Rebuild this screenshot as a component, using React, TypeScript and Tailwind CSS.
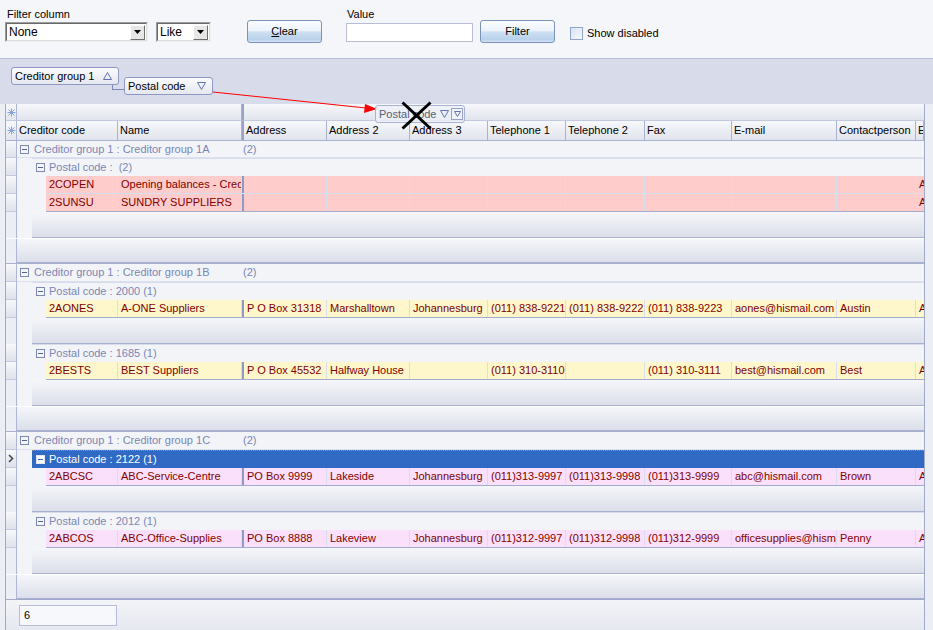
import React from "react";

type Row = string[];
type Sub = { label: string; rows: Row[]; selected?: boolean };
type Group = { label: string; count: string; tint: string; first?: boolean; subs: Sub[] };

const groups: Group[] = [
  {
    label: "Creditor group 1 : Creditor group 1A",
    count: "(2)",
    tint: "bg-[#ffcccc]",
    first: true,
    subs: [
      {
        label: "Postal code :  (2)",
        rows: [
          ["2COPEN", "Opening balances - Creditors", "", "", "", "", "", "", "", "", "A"],
          ["2SUNSU", "SUNDRY SUPPLIERS", "", "", "", "", "", "", "", "", "A"],
        ],
      },
    ],
  },
  {
    label: "Creditor group 1 : Creditor group 1B",
    count: "(2)",
    tint: "bg-[#fff7cc]",
    subs: [
      {
        label: "Postal code : 2000 (1)",
        rows: [["2AONES", "A-ONE Suppliers", "P O Box 31318", "Marshalltown", "Johannesburg", "(011) 838-9221", "(011) 838-9222", "(011) 838-9223", "aones@hismail.com", "Austin", "A"]],
      },
      {
        label: "Postal code : 1685 (1)",
        rows: [["2BESTS", "BEST Suppliers", "P O Box 45532", "Halfway House", "", "(011) 310-3110", "", "(011) 310-3111", "best@hismail.com", "Best", "A"]],
      },
    ],
  },
  {
    label: "Creditor group 1 : Creditor group 1C",
    count: "(2)",
    tint: "bg-[#fae0fa]",
    subs: [
      {
        label: "Postal code : 2122 (1)",
        selected: true,
        rows: [["2ABCSC", "ABC-Service-Centre", "PO Box 9999", "Lakeside", "Johannesburg", "(011)313-9997", "(011)313-9998", "(011)313-9999", "abc@hismail.com", "Brown", "A"]],
      },
      {
        label: "Postal code : 2012 (1)",
        rows: [["2ABCOS", "ABC-Office-Supplies", "PO Box 8888", "Lakeview", "Johannesburg", "(011)312-9997", "(011)312-9998", "(011)312-9999", "officesupplies@hismail.com", "Penny", "A"]],
      },
    ],
  },
];

// widths of the data cells, starting at the first column after the indents
const dataCols = [
  "w-[72px]",
  "w-[124px]",
  "w-[85px] border-l-2 border-l-[#8e99c6]",
  "w-[83px]",
  "w-[78px]",
  "w-[78px]",
  "w-[79px]",
  "w-[87px]",
  "w-[105px]",
  "w-[79px]",
  "flex-1",
];

const headCols: [string, string][] = [
  ["Creditor code", "w-[101px]"],
  ["Name", "w-[124px]"],
  ["Address", "w-[85px] border-l-2 border-l-[#98a1c8]"],
  ["Address 2", "w-[83px]"],
  ["Address 3", "w-[78px]"],
  ["Telephone 1", "w-[78px]"],
  ["Telephone 2", "w-[79px]"],
  ["Fax", "w-[87px]"],
  ["E-mail", "w-[105px]"],
  ["Contactperson", "w-[79px]"],
  ["E", "flex-1"],
];

function Star() {
  return (
    <svg width="9" height="9" viewBox="0 0 9 9" stroke="#86a2dc" strokeWidth="1">
      <line x1="4.5" y1="0.5" x2="4.5" y2="8.5" />
      <line x1="0.5" y1="4.5" x2="8.5" y2="4.5" />
      <line x1="1.5" y1="1.5" x2="7.5" y2="7.5" />
      <line x1="7.5" y1="1.5" x2="1.5" y2="7.5" />
    </svg>
  );
}

function Minus({ light }: { light?: boolean }) {
  return (
    <svg width="9" height="9" viewBox="0 0 9 9" className="shrink-0">
      <rect x="0.5" y="0.5" width="8" height="8" fill={light ? "#ffffff" : "#f4f5f9"} stroke={light ? "#dfe6f6" : "#7d88b3"} />
      <line x1="2" y1="4.5" x2="7" y2="4.5" stroke={light ? "#316ac5" : "#56638f"} />
    </svg>
  );
}

function Tri({ down }: { down?: boolean }) {
  return (
    <svg width="9" height="8" viewBox="0 0 9 8" className="shrink-0">
      {down ? (
        <polygon points="0.5,0.5 8.5,0.5 4.5,7.5" fill="none" stroke="#6074b0" />
      ) : (
        <polygon points="4.5,0.5 8.5,7.5 0.5,7.5" fill="none" stroke="#6074b0" />
      )}
    </svg>
  );
}

function Ind({ box, sel }: { box?: boolean; sel?: boolean }) {
  return (
    <div
      className={`w-[11px] shrink-0 border-r border-r-[#aeb6d4] flex items-center justify-center ${
        box ? "bg-linear-to-b from-[#f7f8fb] to-[#dfe2ec] border-b border-b-[#c3c9df]" : "bg-[#eceef5]"
      }`}
    >
      {sel && (
        <svg width="6" height="9" viewBox="0 0 6 9">
          <path d="M1 1 L4.5 4.5 L1 8" stroke="#4a4a4a" strokeWidth="1.6" fill="none" />
        </svg>
      )}
    </div>
  );
}

function Combo({ w, text }: { w: string; text: string }) {
  return (
    <div className={`${w} h-[20px] border border-t-[#9c9c9c] border-l-[#9c9c9c] border-r-[#efefef] border-b-[#efefef]`}>
      <div className="h-full flex items-center bg-white border border-t-[#696969] border-l-[#696969] border-r-[#dcdcdc] border-b-[#dcdcdc]">
        <span className="pl-[2px] text-[12px] flex-1">{text}</span>
        <div className="w-[15px] h-[15px] mr-px bg-[#e6e6e6] border border-t-[#ffffff] border-l-[#ffffff] border-r-[#6e6e6e] border-b-[#6e6e6e] flex items-center justify-center">
          <svg width="7" height="4" viewBox="0 0 7 4">
            <polygon points="0,0 7,0 3.5,4" fill="#000" />
          </svg>
        </div>
      </div>
    </div>
  );
}

function Btn({ children, className }: { children: React.ReactNode; className: string }) {
  return (
    <div
      className={`${className} w-[75px] h-[23px] rounded-[3px] border border-[#7b92ba] bg-[linear-gradient(#fbfdff_0%,#edf4fc_45%,#cfe0f2_52%,#b9d1ea_88%,#d3e3f3_100%)] flex items-center justify-center text-[11px]`}
    >
      {children}
    </div>
  );
}

function Toolbar() {
  return (
    <div className="h-[58px] flex items-start pl-[5px]">
      <div className="flex flex-col pt-[8px]">
        <span className="pl-[2px] h-[14px] leading-[13px]">Filter column</span>
        <div className="flex gap-[8px]">
          <Combo w="w-[143px]" text="None" />
          <Combo w="w-[55px]" text="Like" />
        </div>
      </div>
      <Btn className="ml-[36px] mt-[20px]">
        <span>
          <span className="underline">C</span>lear
        </span>
      </Btn>
      <div className="flex flex-col pt-[8px] ml-[24px]">
        <span className="pl-px h-[15px] leading-[13px]">Value</span>
        <div className="w-[127px] h-[19px] bg-white border border-[#b7bdd6]" />
      </div>
      <Btn className="ml-[7px] mt-[20px]">Filter</Btn>
      <div className="ml-[15px] mt-[27px] w-[13px] h-[13px] border border-[#8ea4c8] bg-linear-to-br from-[#d9e3f2] to-[#f7f9fd]" />
      <span className="ml-[4px] mt-[26px] leading-[14px]">Show disabled</span>
    </div>
  );
}

function GroupPanel() {
  return (
    <div className="h-[45px] flex items-start bg-[#d8dbe9]">
      <div className="mt-[8px] ml-[11px] w-[108px] h-[18px] rounded-[3px] border border-[#8e98c2] bg-linear-to-b from-[#fbfbfd] to-[#e6e8f0] flex items-center pl-[3px] pr-[6px]">
        <span className="flex-1">Creditor group 1</span>
        <Tri />
      </div>
      <div className="relative mt-[18px] ml-[5px] w-[89px] h-[18px] rounded-[3px] border border-[#8e98c2] bg-linear-to-b from-[#fbfbfd] to-[#e6e8f0] flex items-center pl-[3px] pr-[6px]">
        <span className="flex-1">Postal code</span>
        <Tri down />
        <div className="absolute left-[-13px] top-[7px] w-[12px] h-[5px] border-l border-b border-[#7d88b3]" />
      </div>
    </div>
  );
}

function Headers() {
  return (
    <>
      <div className="flex h-[17px]">
        <div className="w-[11px] shrink-0 border-r border-r-[#aeb6d4] border-b border-b-[#c3c9df] bg-linear-to-b from-[#f7f8fb] to-[#e3e6ee] flex items-center justify-center">
          <Star />
        </div>
        <div className="w-[225px] border-r border-r-[#a9b1d1] border-b border-b-[#c3c9df] bg-linear-to-b from-[#f7f8fb] to-[#e1e4ed]" />
        <div className="flex-1 border-l-2 border-l-[#98a1c8] border-b border-b-[#c3c9df] bg-linear-to-b from-[#f7f8fb] to-[#e1e4ed]" />
      </div>
      <div className="flex h-[20px] border-b border-[#a9b1d1]">
        <div className="w-[11px] shrink-0 border-r border-r-[#aeb6d4] bg-linear-to-b from-[#f7f8fb] to-[#e3e6ee] flex items-center justify-center">
          <Star />
        </div>
        {headCols.map(([t, w]) => (
          <div
            key={t}
            className={`${w} shrink-0 border-r border-r-[#a9b1d1] bg-linear-to-b from-[#f7f8fb] to-[#e1e4ed] flex items-center pl-[2px] overflow-hidden whitespace-nowrap`}
          >
            {t}
          </div>
        ))}
      </div>
    </>
  );
}

function GroupRow({ g }: { g: Group }) {
  return (
    <div className={`flex ${g.first ? "h-[17px]" : "h-[19px] border-t border-[#a9b1d1]"}`}>
      <Ind box />
      <div className="flex-1 flex items-center bg-[#f3f4f8] text-[#7a86b5] border-b border-[#dde1ee]">
        <span className="ml-[3px]">
          <Minus />
        </span>
        <span className="ml-[5px] w-[209px] whitespace-nowrap">{g.label}</span>
        <span>{g.count}</span>
      </div>
    </div>
  );
}

function SubRow({ s }: { s: Sub }) {
  return (
    <div className="flex h-[18px]">
      <Ind box sel={s.selected} />
      <div className="w-[15px] shrink-0 bg-[#f3f4f8]" />
      {s.selected ? (
        <div className="flex-1 flex items-center bg-[#316ac5] text-white border-t border-dotted border-t-[#b08a4a]">
          <span className="ml-[4px]">
            <Minus light />
          </span>
          <span className="ml-[4px] whitespace-pre">{s.label}</span>
        </div>
      ) : (
        <div className="flex-1 flex items-center bg-[#f3f4f8] text-[#7a86b5] border-t border-[#d7dcec]">
          <span className="ml-[4px]">
            <Minus />
          </span>
          <span className="ml-[4px] whitespace-pre">{s.label}</span>
        </div>
      )}
    </div>
  );
}

function DataRow({ r, tint, last }: { r: Row; tint: string; last: boolean }) {
  return (
    <div className="flex h-[18px]">
      <Ind box />
      <div className="w-[15px] shrink-0 bg-[#f3f4f8]" />
      <div className="w-[14px] shrink-0 bg-[#f3f4f8]" />
      <div className={`flex-1 flex ${tint} border-b ${last ? "border-b-[#a3abcc]" : "border-b-[#d9ddf0]"}`}>
        {dataCols.map((w, i) => (
          <div
            key={i}
            className={`${w} shrink-0 border-r border-r-[#d9ddf0] flex items-center pl-[3px] overflow-hidden whitespace-nowrap text-[#800000]`}
          >
            {r[i]}
          </div>
        ))}
      </div>
    </div>
  );
}

function SubFooter() {
  return (
    <div className="flex h-[26px]">
      <Ind />
      <div className="w-[15px] shrink-0 bg-[#f3f4f8]" />
      <div className="flex-1 bg-linear-to-b from-[#f5f6fa] to-[#dcdfea] border-b border-[#a9b1d1]" />
    </div>
  );
}

function GroupFooter() {
  return (
    <div className="flex h-[25px] border-t border-white">
      <Ind />
      <div className="flex-1 bg-linear-to-b from-[#f5f6fa] to-[#dcdfea] border-b border-[#a9b1d1]" />
    </div>
  );
}

export default function App() {
  return (
    <div className="relative w-[933px] h-[630px] overflow-hidden bg-[#f5f6fa] text-[11px] leading-[13px] text-black font-['Liberation_Sans',Arial,sans-serif]">
      <Toolbar />
      <div className="h-[572px] flex flex-col border-t border-[#b5bcd8]">
        <GroupPanel />
        <div className="flex-1 flex min-h-0">
          <div className="w-[5px] bg-[#eceef5]" />
          <div className="w-[920px] flex flex-col border-x border-[#a2aacb]">
            <div className="flex-1 min-h-0 overflow-hidden bg-[#f3f4f8]">
              <Headers />
              {groups.map((g) => (
                <div key={g.label}>
                  <GroupRow g={g} />
                  {g.subs.map((s) => (
                    <div key={s.label}>
                      <SubRow s={s} />
                      {s.rows.map((r, i) => (
                        <DataRow key={r[0]} r={r} tint={g.tint} last={i === s.rows.length - 1} />
                      ))}
                      <SubFooter />
                    </div>
                  ))}
                  <GroupFooter />
                </div>
              ))}
            </div>
            <div className="h-[31px] shrink-0 border-t border-[#a2aacb] bg-linear-to-b from-[#f3f4f8] to-[#e6e8f0] flex items-center pl-[13px]">
              <div className="w-[98px] h-[21px] bg-[#f7f8fb] border border-[#b7bdd6] flex items-center pl-[4px]">6</div>
            </div>
          </div>
          <div className="flex-1 bg-[#eceef5]" />
        </div>
      </div>

      {/* drag feedback: arrow, ghost header and the "no drop" cross */}
      <svg className="absolute left-0 top-0 pointer-events-none" width="933" height="630">
        <line x1="213" y1="92" x2="366" y2="108" stroke="#ff0000" strokeWidth="1" />
        <polygon points="377,109 365,104 364,113" fill="#ff0000" />
      </svg>
      <div className="absolute left-[375px] top-[105px] w-[90px] h-[18px] rounded-[3px] border border-[#aab2d2] bg-[#eef0f7]/80 flex items-center pl-[3px] pr-px text-[#5a5e70]">
        <span className="whitespace-nowrap">Postal code</span>
        <span className="ml-auto">
          <Tri down />
        </span>
        <div className="ml-[2px] w-[12px] h-[12px] shrink-0 border border-[#98a2c8] bg-[#f2f3f8] flex items-center justify-center">
          <svg width="7" height="6" viewBox="0 0 7 6">
            <polygon points="0.5,0.5 6.5,0.5 3.5,5.5" fill="none" stroke="#6074b0" />
          </svg>
        </div>
      </div>
      <svg className="absolute left-[401px] top-[101px] pointer-events-none" width="31" height="29">
        <line x1="1.5" y1="1.5" x2="29.5" y2="27.5" stroke="#000" strokeWidth="3" />
        <line x1="29.5" y1="1.5" x2="1.5" y2="27.5" stroke="#000" strokeWidth="3" />
      </svg>
    </div>
  );
}
